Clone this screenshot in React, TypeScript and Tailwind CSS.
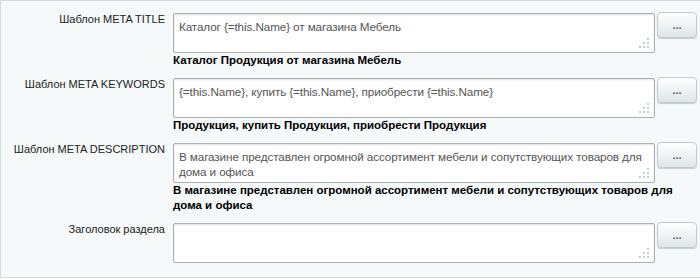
import React from 'react';

type Row = {
  label: string;
  value: string;
  preview: string;
};

const ROWS: Row[] = [
  {
    label: 'Шаблон META TITLE',
    value: 'Каталог {=this.Name} от магазина Мебель',
    preview: 'Каталог Продукция от магазина Мебель',
  },
  {
    label: 'Шаблон META KEYWORDS',
    value: '{=this.Name}, купить {=this.Name}, приобрести {=this.Name}',
    preview: 'Продукция, купить Продукция, приобрести Продукция',
  },
  {
    label: 'Шаблон META DESCRIPTION',
    value: 'В магазине представлен огромной ассортимент мебели и сопутствующих товаров для дома и офиса',
    preview: 'В магазине представлен огромной ассортимент мебели и сопутствующих товаров для дома и офиса',
  },
  {
    label: 'Заголовок раздела',
    value: '',
    preview: '',
  },
];

function Grip() {
  // dotted resize corner, like the old admin skin
  return (
    <svg width="10" height="10" viewBox="0 0 10 10" className="absolute right-[6px] bottom-[5px]">
      <rect x="8" y="0" width="2" height="2" fill="#c9cdcd" />
      <rect x="4" y="4" width="2" height="2" fill="#c9cdcd" />
      <rect x="8" y="4" width="2" height="2" fill="#c9cdcd" />
      <rect x="0" y="8" width="2" height="2" fill="#c9cdcd" />
      <rect x="4" y="8" width="2" height="2" fill="#c9cdcd" />
      <rect x="8" y="8" width="2" height="2" fill="#c9cdcd" />
    </svg>
  );
}

function TemplateRow({ row }: { row: Row }) {
  return (
    <div className="flex">
      <div className="w-[172px] shrink-0 pr-[8px] text-right text-[11px] leading-[13px] text-[#222]">
        {row.label}
      </div>
      <div className="w-[524px] shrink-0">
        <div className="flex gap-[2px]">
          <div className="relative">
            <textarea
              defaultValue={row.value}
              className="block w-[482px] h-[40px] resize-none overflow-hidden rounded-[2px] border border-[#a9b0b0] bg-white pl-[5px] pr-[2px] pt-[5px] text-[11.7px] leading-[15px] tracking-[-0.1px] text-[#555] shadow-[inset_0_1px_2px_rgba(0,0,0,0.12)] outline-none"
              style={{ fontFamily: '"Liberation Sans", Arial, sans-serif' }}
            />
            <Grip />
          </div>
          <button className="-mt-[1px] flex h-[26px] w-[40px] items-center justify-center rounded-[4px] border border-[#c2cbcb] bg-gradient-to-b from-white to-[#dfe6e8] text-[11px] font-bold leading-none text-[#46637a] shadow-[0_1px_1px_rgba(0,0,0,0.18)]">
            ...
          </button>
        </div>
        {row.preview && (
          <div className="text-[11.5px] leading-[15px] font-bold text-black">{row.preview}</div>
        )}
      </div>
    </div>
  );
}

export default function App() {
  return (
    <div
      className="h-[278px] w-[700px] border-t border-l border-b border-[#d7dcdc] bg-[#f5f9f9] pt-[12px] flex flex-col gap-[10px]"
      style={{ fontFamily: '"Liberation Sans", Arial, sans-serif' }}
    >
      {ROWS.map(r => (
        <TemplateRow key={r.label} row={r} />
      ))}
    </div>
  );
}
